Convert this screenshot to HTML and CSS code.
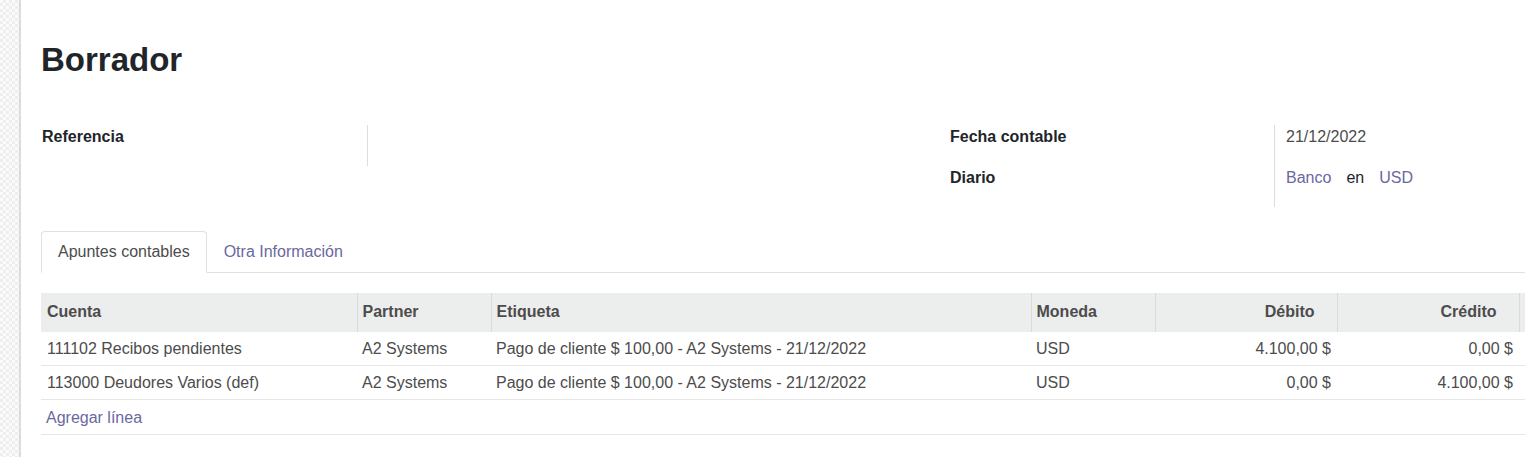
FILE: index.html
```html
<!DOCTYPE html>
<html lang="es">
<head>
<meta charset="utf-8">
<title>Borrador</title>
<link rel="stylesheet" href="styles.css">
</head>
<body>
<div class="page">
  <div class="strip"></div>
  <div class="sheet">
    <h1 class="title">Borrador</h1>
    <div class="groups">
      <div class="group">
        <div class="field">
          <div class="label">Referencia</div>
          <div class="value"></div>
        </div>
      </div>
      <div class="group">
        <div class="field">
          <div class="label">Fecha contable</div>
          <div class="value">21/12/2022</div>
        </div>
        <div class="field">
          <div class="label">Diario</div>
          <div class="value"><span class="link">Banco</span><span class="en">en</span><span class="link">USD</span></div>
        </div>
      </div>
    </div>
    <div class="tabs">
      <div class="tab active">Apuntes contables</div>
      <div class="tab">Otra Información</div>
    </div>
    <div class="tab-content">
      <table class="lines">
        <colgroup>
          <col class="c-cuenta"><col class="c-partner"><col class="c-etiqueta"><col class="c-moneda"><col class="c-num"><col class="c-num"><col class="c-extra">
        </colgroup>
        <thead>
          <tr>
            <th>Cuenta</th>
            <th>Partner</th>
            <th>Etiqueta</th>
            <th>Moneda</th>
            <th class="num">Débito</th>
            <th class="num">Crédito</th>
            <th></th>
          </tr>
        </thead>
        <tbody>
          <tr>
            <td>111102 Recibos pendientes</td>
            <td>A2 Systems</td>
            <td>Pago de cliente $ 100,00 - A2 Systems - 21/12/2022</td>
            <td>USD</td>
            <td class="num">4.100,00 $</td>
            <td class="num">0,00 $</td>
            <td></td>
          </tr>
          <tr>
            <td>113000 Deudores Varios (def)</td>
            <td>A2 Systems</td>
            <td>Pago de cliente $ 100,00 - A2 Systems - 21/12/2022</td>
            <td>USD</td>
            <td class="num">0,00 $</td>
            <td class="num">4.100,00 $</td>
            <td></td>
          </tr>
          <tr>
            <td colspan="7" class="add"><span class="link">Agregar línea</span></td>
          </tr>
        </tbody>
      </table>
    </div>
  </div>
</div>
</body>
</html>
```

FILE: styles.css
```css
html, body {
  margin: 0;
  padding: 0;
  background: #ffffff;
  overflow: hidden;
}
body {
  font-family: "Liberation Sans", Arial, sans-serif;
  font-size: 16px;
  color: #212529;
}
.page {
  display: flex;
  width: 2000px;
  min-height: 457px;
}
.strip {
  width: 19px;
  flex: none;
  background-color: #f7f7f7;
  background-image: repeating-conic-gradient(#eeeeee 0 25%, #fbfbfb 0 50%);
  background-size: 6px 6px;
  border-right: 2px solid #dcdcdc;
}
.sheet {
  flex: 1;
  padding: 41px 0 0 20px;
}
.title {
  margin: 0;
  font-size: 33px;
  line-height: 38px;
  font-weight: bold;
  color: #212529;
}
.groups {
  display: grid;
  grid-template-columns: 908px 908px;
  margin-top: 46px;
}
.field {
  display: grid;
  grid-template-columns: 326px 1fr;
}
.group:last-child .field {
  grid-template-columns: 325px 1fr;
}
.label {
  font-weight: bold;
  line-height: 24px;
  padding: 0 0 17px 1px;
}
.value {
  border-left: 1px solid #dddddd;
  padding: 0 0 17px 11px;
  line-height: 24px;
  color: #4c4c4c;
}
.link {
  color: #6a689f;
}
.en {
  color: #212529;
  margin: 0 15px;
}
.tabs {
  display: flex;
  margin-top: 24px;
  border-bottom: 1px solid #dee2e6;
}
.tab {
  padding: 8px 16px;
  line-height: 24px;
  border: 1px solid transparent;
  border-top-left-radius: 4px;
  border-top-right-radius: 4px;
  margin-bottom: -1px;
  color: #6a689f;
}
.tab.active {
  border-color: #dee2e6 #dee2e6 #ffffff;
  background: #ffffff;
  color: #4c4c4c;
}
.tab-content {
  padding-top: 20px;
}
.lines {
  border-collapse: collapse;
  table-layout: fixed;
  width: 1518px;
}
.c-cuenta { width: 316px; }
.c-partner { width: 134px; }
.c-etiqueta { width: 540px; }
.c-moneda { width: 124px; }
.c-num { width: 182px; }
.c-extra { width: 40px; }
.lines th {
  background: #eceded;
  color: #4c4c4c;
  font-weight: bold;
  text-align: left;
  padding: 7px 5px 8px;
  line-height: 24px;
  border-left: 1px solid #d9dbdb;
}
.lines th:first-child {
  border-left: none;
  padding-left: 6px;
}
.lines th.num {
  text-align: right;
  padding-right: 22px;
}
.lines td {
  color: #4c4c4c;
  padding: 6px 5px 5px;
  line-height: 22px;
  border-bottom: 1px solid #e6e6e6;
  white-space: nowrap;
  overflow: hidden;
}
.lines td:first-child {
  padding-left: 6px;
}
.lines td.num {
  text-align: right;
  padding-right: 6px;
}
.lines td.add {
  padding: 7px 5px 5px;
}
```
